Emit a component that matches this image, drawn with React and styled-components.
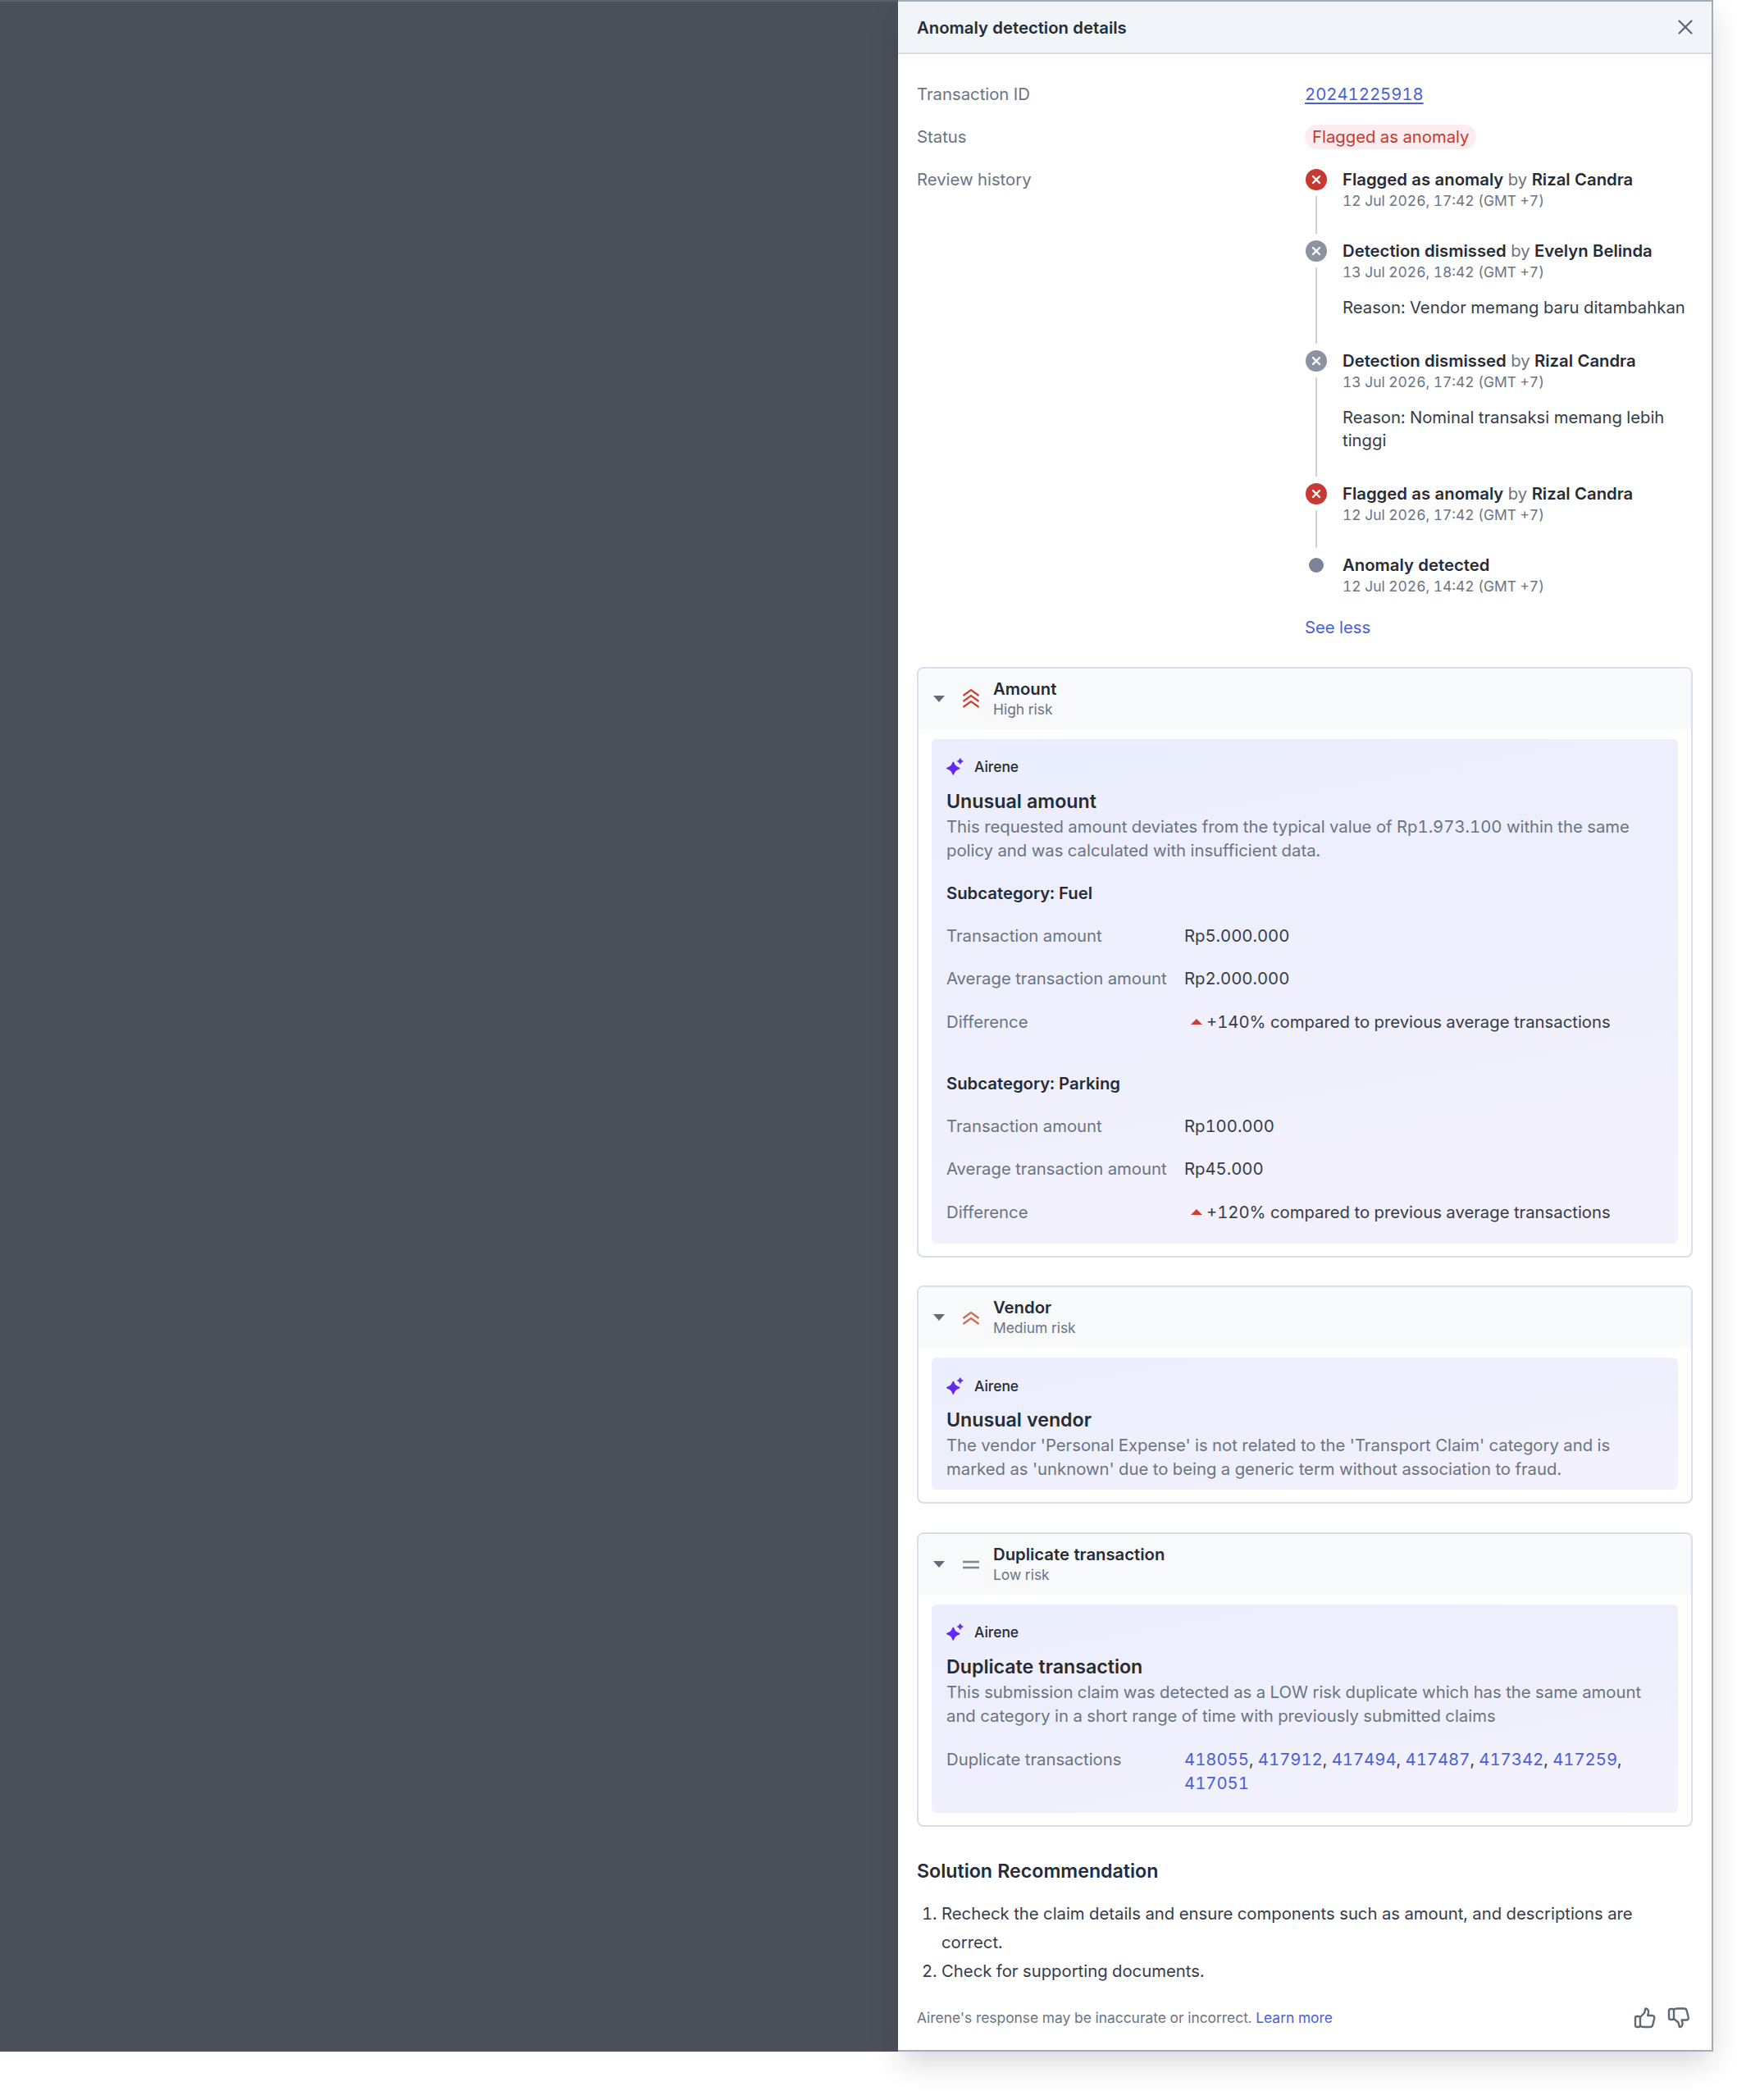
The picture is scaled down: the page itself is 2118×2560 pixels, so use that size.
import React from "react";
import styled, { createGlobalStyle } from "styled-components";
import { X } from "lucide-react";

const GlobalStyle = createGlobalStyle`
  html, body {
    margin: 0;
    background: #fff;
  }
  body {
    font-family: "Inter", "Liberation Sans", sans-serif;
    font-variant-numeric: tabular-nums;
    color: #262c37;
  }
  * {
    box-sizing: border-box;
  }
`;

const Page = styled.div`
  display: flex;
  width: 2118px;
  height: 2560px;
  align-items: flex-start;
`;

const Overlay = styled.div`
  width: 1095px;
  height: 2501px;
  background: #4c5059;
  border-top: 2px solid #5b6068;
`;

const Panel = styled.aside`
  width: 994px;
  height: 2501px;
  background: #fff;
  border-right: 2px solid #a3abbb;
  border-bottom: 2px solid #a3abbb;
  border-top: 2px solid #a3abbb;
  box-shadow: 0 14px 36px -4px rgba(20, 25, 35, 0.2);
  display: flex;
  flex-direction: column;
`;

const Header = styled.header`
  height: 64px;
  flex: none;
  background: #f1f4f9;
  border-bottom: 2px solid #d6dbe4;
  display: flex;
  align-items: center;
  justify-content: space-between;
  padding: 0 17px 0 23px;
`;

const Title = styled.h1`
  margin: 0;
  font-size: 20.3px;
  font-weight: 600;
  color: #262c37;
`;

const Body = styled.div`
  flex: 1;
  padding: 32px 23px 0 23px;
  display: flex;
  flex-direction: column;
`;

const InfoRow = styled.div`
  display: grid;
  grid-template-columns: 473px 1fr;
  min-height: 33px;
  margin-bottom: 19px;
  font-size: 20.3px;
  line-height: 33px;
`;

const Label = styled.div`
  color: #6b7483;
`;

const IdLink = styled.a`
  color: #4a5fd8;
  text-decoration: underline;
  text-underline-offset: 3px;
`;

const StatusPill = styled.span`
  display: inline-block;
  height: 30px;
  line-height: 30px;
  padding: 0 9px;
  border-radius: 15px;
  background: #fdeced;
  color: #c53a32;
`;

const Timeline = styled.div`
  display: flex;
  flex-direction: column;
`;

const Step = styled.div`
  position: relative;
  padding-left: 46px;
  padding-bottom: ${({ $pad }) => $pad}px;
`;

const StepLine = styled.span`
  position: absolute;
  left: 13px;
  top: 37px;
  bottom: 4px;
  width: 2px;
  background: #cdd2dc;
`;

const Dot = styled.span`
  position: absolute;
  left: 1px;
  top: 4px;
  width: 26px;
  height: 26px;
  border-radius: 50%;
  background: ${({ $color }) => $color};
  display: flex;
  align-items: center;
  justify-content: center;
`;

const PlainDot = styled.span`
  position: absolute;
  left: 5px;
  top: 8px;
  width: 18px;
  height: 18px;
  border-radius: 50%;
  background: #7a8494;
`;

const StepTitle = styled.div`
  font-size: 20.3px;
  line-height: 33px;
  color: #6b7483;
  b {
    font-weight: 600;
    color: #262c37;
  }
`;

const StepDate = styled.div`
  font-size: 17.4px;
  line-height: 19px;
  color: #6b7483;
`;

const Reason = styled.div`
  font-size: 20.3px;
  line-height: 28.6px;
  margin-top: 20px;
  color: #363c48;
`;

const SeeLess = styled.a`
  display: block;
  margin: 5px 0 32px 473px;
  font-size: 20.3px;
  line-height: 33px;
  color: #4a5fd8;
`;

const Card = styled.section`
  border: 2px solid #dadee6;
  border-radius: 8px;
  margin-bottom: 34.5px;
  overflow: hidden;
`;

const CardHead = styled.div`
  display: flex;
  align-items: center;
  height: 74px;
  background: #f8f9fb;
  padding-left: 18px;
`;

const Caret = styled.span`
  width: 0;
  height: 0;
  border-left: 7.5px solid transparent;
  border-right: 7.5px solid transparent;
  border-top: 8px solid #646b78;
  margin-right: 21px;
  flex: none;
`;

const RiskIcon = styled.svg`
  width: 22px;
  height: 26px;
  margin-right: 16px;
  flex: none;
`;

const CardTitle = styled.div`
  font-size: 20.3px;
  font-weight: 600;
  line-height: 26px;
`;

const CardSub = styled.div`
  font-size: 17.4px;
  line-height: 24px;
  color: #6b7483;
`;

const CardBody = styled.div`
  padding: 12px 16px 15px;
`;

const Insight = styled.div`
  background: linear-gradient(170deg, #ebeefe 0%, #f3f1fc 100%);
  border-radius: 6px;
  padding: 21px 18px 3px;
`;

const Brand = styled.div`
  display: flex;
  align-items: center;
  gap: 13px;
  font-size: 17.4px;
  font-weight: 500;
  height: 26px;
`;

const InsightTitle = styled.h3`
  margin: 13px 0 0;
  font-size: 23.2px;
  font-weight: 600;
  line-height: 32px;
`;

const InsightText = styled.p`
  margin: 0 0 8px;
  font-size: 20.3px;
  line-height: 29px;
  color: #6b7483;
`;

const SubHeading = styled.div`
  font-size: 20.3px;
  font-weight: 600;
  line-height: 33px;
  margin: ${({ $first }) => ($first ? "21px" : "42px")} 0 19.3px;
`;

const Metric = styled.div`
  display: grid;
  grid-template-columns: 290px 1fr;
  font-size: 20.3px;
  line-height: 33px;
  margin-top: ${({ $top }) => $top || 0}px;
  margin-bottom: 19.3px;
`;

const MetricValue = styled.div`
  color: #363c48;
  display: flex;
  align-items: center;
`;

const Up = styled.span`
  width: 0;
  height: 0;
  border-left: 7px solid transparent;
  border-right: 7px solid transparent;
  border-bottom: 7px solid #cf3d33;
  margin: 0 5px 0 8px;
`;

const LinkList = styled.div`
  line-height: 29px;
  padding-top: 2px;
  color: #363c48;
  a {
    color: #4a5fd8;
  }
`;

const SectionTitle = styled.h2`
  margin: 3px 0 18px;
  font-size: 23.2px;
  font-weight: 600;
  line-height: 32px;
`;

const Steps = styled.ol`
  margin: 0;
  padding-left: 30px;
  font-size: 20.3px;
  line-height: 35px;
  color: #363c48;
`;

const Footer = styled.div`
  display: flex;
  align-items: center;
  justify-content: space-between;
  margin-top: 26px;
  font-size: 17.4px;
  color: #6b7483;
  a {
    color: #4a5fd8;
  }
`;

const Thumbs = styled.div`
  display: flex;
  gap: 13px;
  padding-right: 3px;
`;

const ThumbIcon = styled.svg`
  width: 28px;
  height: 28px;
  fill: none;
  stroke: #5f6876;
  stroke-width: 2.4;
  stroke-linejoin: round;
  stroke-linecap: round;
`;

const Cross = () => (
  <svg width="12" height="12" viewBox="0 0 12 12">
    <path d="M2 2l8 8M10 2l-8 8" stroke="#fff" strokeWidth="2.4" strokeLinecap="round" />
  </svg>
);

const Sparkle = () => (
  <svg width="21" height="21" viewBox="0 0 21 21">
    <path
      d="M8.300 5.500Q10 11 15.500 12.700Q10 14.300 8.300 19.800Q6.600 14.300 1 12.700Q6.600 11 8.300 5.500z"
      fill="#6429f0"
      stroke="#6429f0"
      strokeWidth="1.800"
      strokeLinejoin="round"
    />
    <path
      d="M16.800 .500Q17.500 3 20.300 4Q17.500 4.800 16.800 7.500Q16 4.800 13.300 4Q16 3 16.800 .500z"
      fill="#6429f0"
      stroke="#6429f0"
      strokeWidth=".8"
      strokeLinejoin="round"
    />
  </svg>
);

const Risk = ({ level }) => {
  const rows = { high: [3, 10, 17], medium: [8, 15], low: [] }[level];
  const color = level === "high" ? "#c9432f" : "#d0694d";
  return (
    <RiskIcon viewBox="0 0 22 26" fill="none">
      {rows.map((y) => (
        <path key={y} d={`M1.500 ${y + 6}l9.500-7 9.500 7`} stroke={color} strokeWidth="2.2" />
      ))}
      {level === "low" && <path d="M1 10h20M1 17h20" stroke="#7d8695" strokeWidth="2.400" />}
    </RiskIcon>
  );
};

const history = [
  { color: "#c73a32", action: "Flagged as anomaly", by: "Rizal Candra", date: "12 Jul 2026, 17:42 (GMT +7)" },
  {
    color: "#8b92a1",
    action: "Detection dismissed",
    by: "Evelyn Belinda",
    date: "13 Jul 2026, 18:42 (GMT +7)",
    reason: "Reason: Vendor memang baru ditambahkan",
  },
  {
    color: "#8b92a1",
    action: "Detection dismissed",
    by: "Rizal Candra",
    date: "13 Jul 2026, 17:42 (GMT +7)",
    reason: "Reason: Nominal transaksi memang lebih tinggi",
  },
  { color: "#c73a32", action: "Flagged as anomaly", by: "Rizal Candra", date: "12 Jul 2026, 17:42 (GMT +7)" },
  { action: "Anomaly detected", date: "12 Jul 2026, 14:42 (GMT +7)" },
];

const subcategories = [
  { name: "Fuel", amount: "Rp5.000.000", average: "Rp2.000.000", diff: "+140%" },
  { name: "Parking", amount: "Rp100.000", average: "Rp45.000", diff: "+120%" },
];

const duplicateIds = ["418055", "417912", "417494", "417487", "417342", "417259", "417051"];

const RiskCard = ({ level, name, risk, title, text, children }) => (
  <Card>
    <CardHead>
      <Caret />
      <Risk level={level} />
      <div>
        <CardTitle>{name}</CardTitle>
        <CardSub>{risk}</CardSub>
      </div>
    </CardHead>
    <CardBody>
      <Insight>
        <Brand>
          <Sparkle />
          Airene
        </Brand>
        <InsightTitle>{title}</InsightTitle>
        <InsightText>{text}</InsightText>
        {children}
      </Insight>
    </CardBody>
  </Card>
);

const stepPad = (item, last) => {
  if (last) return 0;
  return item.reason ? 33.5 : 34.5;
};

export default function App() {
  return (
    <>
      <GlobalStyle />
      <Page>
        <Overlay />
        <Panel>
          <Header>
            <Title>Anomaly detection details</Title>
            <X size={30} color="#5f6672" strokeWidth={1.7} />
          </Header>
          <Body>
            <InfoRow>
              <Label>Transaction ID</Label>
              <div>
                <IdLink>20241225918</IdLink>
              </div>
            </InfoRow>
            <InfoRow>
              <Label>Status</Label>
              <div>
                <StatusPill>Flagged as anomaly</StatusPill>
              </div>
            </InfoRow>
            <InfoRow>
              <Label>Review history</Label>
              <Timeline>
                {history.map((item, i) => {
                  const last = i === history.length - 1;
                  return (
                    <Step key={i} $pad={stepPad(item, last)}>
                      {item.color ? (
                        <Dot $color={item.color}>
                          <Cross />
                        </Dot>
                      ) : (
                        <PlainDot />
                      )}
                      {!last && <StepLine />}
                      <StepTitle>
                        <b>{item.action}</b>
                        {item.by && (
                          <>
                            {" by "}
                            <b>{item.by}</b>
                          </>
                        )}
                      </StepTitle>
                      <StepDate>{item.date}</StepDate>
                      {item.reason && <Reason>{item.reason}</Reason>}
                    </Step>
                  );
                })}
              </Timeline>
            </InfoRow>
            <SeeLess>See less</SeeLess>

            <RiskCard
              level="high"
              name="Amount"
              risk="High risk"
              title="Unusual amount"
              text="This requested amount deviates from the typical value of Rp1.973.100 within the same policy and was calculated with insufficient data."
            >
              {subcategories.map((sub, i) => (
                <div key={sub.name}>
                  <SubHeading $first={i === 0}>Subcategory: {sub.name}</SubHeading>
                  <Metric>
                    <Label>Transaction amount</Label>
                    <MetricValue>{sub.amount}</MetricValue>
                  </Metric>
                  <Metric>
                    <Label>Average transaction amount</Label>
                    <MetricValue>{sub.average}</MetricValue>
                  </Metric>
                  <Metric>
                    <Label>Difference</Label>
                    <MetricValue>
                      <Up />
                      {sub.diff} compared to previous average transactions
                    </MetricValue>
                  </Metric>
                </div>
              ))}
            </RiskCard>

            <RiskCard
              level="medium"
              name="Vendor"
              risk="Medium risk"
              title="Unusual vendor"
              text="The vendor 'Personal Expense' is not related to the 'Transport Claim' category and is marked as 'unknown' due to being a generic term without association to fraud."
            />

            <RiskCard
              level="low"
              name="Duplicate transaction"
              risk="Low risk"
              title="Duplicate transaction"
              text="This submission claim was detected as a LOW risk duplicate which has the same amount and category in a short range of time with previously submitted claims"
            >
              <Metric $top={22}>
                <Label>Duplicate transactions</Label>
                <LinkList>
                  {duplicateIds.map((id, i) => (
                    <React.Fragment key={id}>
                      <a>{id}</a>
                      {i < duplicateIds.length - 1 && ", "}
                    </React.Fragment>
                  ))}
                </LinkList>
              </Metric>
            </RiskCard>

            <SectionTitle>Solution Recommendation</SectionTitle>
            <Steps>
              <li>Recheck the claim details and ensure components such as amount, and descriptions are correct.</li>
              <li>Check for supporting documents.</li>
            </Steps>
            <Footer>
              <span>
                Airene's response may be inaccurate or incorrect. <a>Learn more</a>
              </span>
              <Thumbs>
                <ThumbIcon viewBox="0 0 28 28">
                  <rect x="2" y="12" width="6" height="13" rx="2" />
                  <path d="M8 13l5-5c.6-2 1-4 1.500-5.500 2.500 0 4 2 3.500 5l-.8 3.500h5.300c2 0 3.200 1.700 2.700 3.500l-2 8c-.4 1.500-1.500 2.500-3 2.500H12c-1.500 0-3-.5-4-1.500" />
                </ThumbIcon>
                <ThumbIcon viewBox="0 0 28 28">
                  <rect x="2" y="3" width="6" height="13" rx="2" />
                  <path d="M8 4c1-1 2.500-1.500 4-1.500h8.700c1.500 0 2.600 1 3 2.500l2 8c.5 1.800-.7 3.500-2.700 3.500h-5.300l.8 3.500c.5 3-1 5-3.500 5-.5-1.500-.9-3.500-1.500-5.500L8 15" />
                </ThumbIcon>
              </Thumbs>
            </Footer>
          </Body>
        </Panel>
      </Page>
    </>
  );
}
